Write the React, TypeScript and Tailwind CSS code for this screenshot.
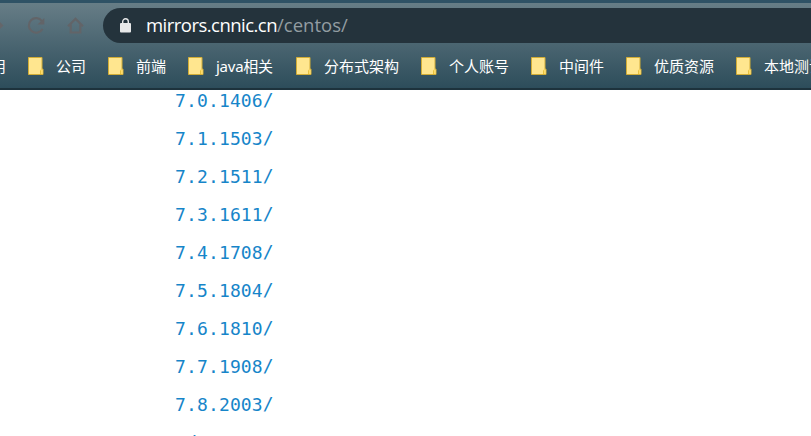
const bookmarks = [
  { name: '公司', width: 'w-[30px]' },
  { name: '前端', width: 'w-[30px]' },
  { name: 'java相关', width: 'w-[58px]' },
  { name: '分布式架构', width: 'w-[75px]' },
  { name: '个人账号', width: 'w-[60px]' },
  { name: '中间件', width: 'w-[45px]' },
  { name: '优质资源', width: 'w-[60px]' },
  { name: '本地测试', width: 'w-[60px]' },
];

const releases = [
  '7.0.1406',
  '7.1.1503',
  '7.2.1511',
  '7.3.1611',
  '7.4.1708',
  '7.5.1804',
  '7.6.1810',
  '7.7.1908',
  '7.8.2003',
  '7',
];

function FolderIcon() {
  return (
    <svg className="h-[18px] w-4 shrink-0" viewBox="0 0 16 18">
      <path d="M.5.5h13.5v11.5h1v5.5H.5z" fill="#ffe68f" stroke="#d2ad36" />
      <path d="M12.5 17v-3.5l1-1.2" fill="none" stroke="#e9c13e" />
      <path d="M13 13h1.5v4H13z" fill="#ffdc67" />
    </svg>
  );
}

function Toolbar() {
  return (
    <div className="flex h-10 shrink-0 items-start pt-[5px]">
      <svg className="h-[35px] w-[103px] shrink-0" viewBox="0 0 103 35">
        <path d="M0 14l3.5 3.5L0 21z" fill="#64666a" />
        <g fill="none" stroke="#626468" strokeWidth="2.2">
          <path d="M42 13.1A7.3 7.3 0 1 0 42.5 21" />
          <path d="M68 18.3L75.5 10.9L83 18.3M70.7 16.5V24.5H80.3V16.5" />
        </g>
        <path d="M44.3 10v6.5H37.5z" fill="#626468" />
      </svg>
      <div className="flex h-[35px] flex-1 items-center rounded-l-full bg-[#24333c] pl-[17px]">
        <svg className="h-[15px] w-[11px] shrink-0" viewBox="0 0 11 15">
          <rect y="5" width="11" height="9.5" rx="1" fill="#e7e8e9" />
          <path d="M2.7 6V3.6a2.8 2.8 0 0 1 5.6 0V6" fill="none" stroke="#e7e8e9" strokeWidth="1.4" />
        </svg>
        <div className="mb-0.5 ml-[15px] flex h-[26px] items-center whitespace-nowrap font-['Open_Sans','Noto_Sans',sans-serif] text-[18.5px] leading-[26px]">
          <span className="w-[131px] tracking-[-0.53px] text-white">mirrors.cnnic.cn</span>
          <span className="tracking-[0.02px] text-[#939da2]">/centos/</span>
        </div>
      </div>
    </div>
  );
}

function BookmarkBar() {
  return (
    <div className="flex h-[45px] shrink-0 items-center overflow-hidden font-['Noto_Sans','Noto_Sans_CJK_SC',sans-serif] text-[15px] leading-5 text-white">
      <span className="-ml-[9px] mr-[22px] w-[15px] shrink-0">用</span>
      {bookmarks.map(({ name, width }) => (
        <div key={name} className="mr-[22px] flex shrink-0 items-center gap-3">
          <FolderIcon />
          <span className={`${width} whitespace-nowrap ${name === 'java相关' ? 'tracking-[-0.25px]' : ''}`}>{name}</span>
        </div>
      ))}
    </div>
  );
}

export default function App() {
  return (
    <div className="flex h-[436px] w-full flex-col overflow-hidden bg-white">
      <header className="flex h-[90px] shrink-0 flex-col overflow-hidden border-b-2 border-[#1d323c] bg-linear-to-b from-[#697f88] to-[#2d4d5b]">
        <div className="h-[3px] shrink-0 bg-[#2f5265]" />
        <Toolbar />
        <BookmarkBar />
      </header>
      <main className="-mt-[9px] min-h-0 flex-1">
        <ul className="pl-[175px] font-['DejaVu_Sans_Mono',monospace] text-[18px] tracking-[0.14px] text-[#1685c9]">
          {releases.map((release) => (
            <li key={release} className="flex h-[38px] items-center">
              <a className="flex">
                {release}
                <span className="-mt-px">/</span>
              </a>
            </li>
          ))}
        </ul>
      </main>
    </div>
  );
}
